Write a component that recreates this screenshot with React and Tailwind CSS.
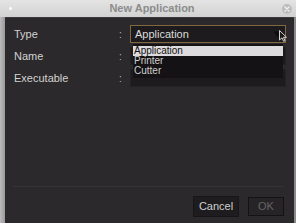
export default function App() {
  const font = { fontFamily: '"Liberation Sans", Arial, sans-serif' };
  return (
    <div className="w-[296px] h-[223px] flex flex-col overflow-hidden bg-[#cfcfcf] select-none" style={font}>
      {/* Title bar */}
      <div className="relative h-[17px] shrink-0 flex items-center justify-center bg-gradient-to-b from-[#e4e4e4] to-[#d2d2d2]">
        <span className="absolute left-[9px] top-[7px] w-[3px] h-[3px] rounded-full bg-white" />
        <span className="text-[11px] font-bold text-[#8c8c8c] leading-none ml-[8px]">New Application</span>
        <span className="absolute right-[4px] top-[4px] w-[10px] h-[10px] rounded-full bg-[#bdbdbd] flex items-center justify-center">
          <svg width="6" height="6" viewBox="0 0 6 6">
            <path d="M1 1L5 5M5 1L1 5" stroke="#f2f2f2" strokeWidth="1.3" strokeLinecap="round" />
          </svg>
        </span>
      </div>

      <div className="flex flex-1 min-h-0">
        <div className="w-[5px] bg-gradient-to-r from-[#bcbcbc] to-[#9a9a9a]" />
        <div className="relative flex-1 flex flex-col bg-[#2b292b] border-t border-[#3c3a3c] pt-[7px] pr-[8px] pb-[6px]">
          {/* Form rows */}
          <div className="flex flex-col gap-[4px]">
            <div className="flex items-center h-[18px]">
              <span className="w-[114px] pl-[9px] text-[11px] text-[#d2d2d2]">Type</span>
              <span className="w-[11px] text-[10px] text-[#bbb]">:</span>
              <div className="flex-1 h-[18px] flex items-center justify-between border border-[#80673f] bg-[#1d1b1d] pl-[4px] pr-[3px]">
                <span className="text-[11px] text-[#dcdcdc]">Application</span>
                <svg width="9" height="7" viewBox="0 0 9 7">
                  <path d="M0.5 0.5H8.5L4.5 6.5Z" fill="#0e0d0e" />
                </svg>
              </div>
            </div>
            <div className="flex items-center h-[18px]">
              <span className="w-[114px] pl-[9px] text-[11px] text-[#d2d2d2]">Name</span>
              <span className="w-[11px] text-[10px] text-[#bbb]">:</span>
              <div className="flex-1 h-[18px] bg-[#1d1b1d] border border-[#232123]" />
            </div>
            <div className="flex items-center h-[18px]">
              <span className="w-[114px] pl-[9px] text-[11px] text-[#d2d2d2]">Executable</span>
              <span className="w-[11px] text-[10px] text-[#bbb]">:</span>
              <div className="flex-1 h-[18px] bg-[#1d1b1d] border border-[#232123]" />
            </div>
          </div>

          <div className="flex-1" />

          {/* Separator */}
          <div className="ml-[8px] mr-[2px] h-px bg-[#141314] border-b border-[#353335]" />

          {/* Buttons */}
          <div className="flex justify-end gap-[9px] mt-[9px] pr-[2px]">
            <button className="w-[46px] h-[21px] bg-[#1e1c1e] border border-[#171617] text-[11px] text-[#cfcfcf]">Cancel</button>
            <button className="w-[36px] h-[19px] mt-[1px] bg-[#262426] border border-[#141314] text-[11px] text-[#666466]">OK</button>
          </div>

          {/* Open dropdown list */}
          <div className="absolute left-[128px] top-[26px] w-[150px] h-[34px] bg-[#141214] pt-[2px] flex flex-col">
            <div className="h-[10px] flex items-center bg-[#dddbdd] text-[10px] leading-[10px] text-[#111] pl-[1px]">Application</div>
            <div className="h-[10px] flex items-center text-[10px] leading-[10px] text-[#cfcfcf] pl-[1px]">Printer</div>
            <div className="h-[10px] flex items-center text-[10px] leading-[10px] text-[#cfcfcf] pl-[1px]">Cutter</div>
          </div>

          {/* Mouse cursor */}
          <svg className="absolute left-[274px] top-[12px]" width="8" height="12" viewBox="0 0 8 12">
            <path d="M0.5 0.5V10L3 7.8L4.6 11.3L6 10.7L4.5 7.3H7.5Z" fill="#1a1a1a" stroke="#e8e8e8" strokeWidth="0.9" />
          </svg>
        </div>
        <div className="w-[2px] bg-[#8a8a8a]" />
      </div>
    </div>
  );
}
